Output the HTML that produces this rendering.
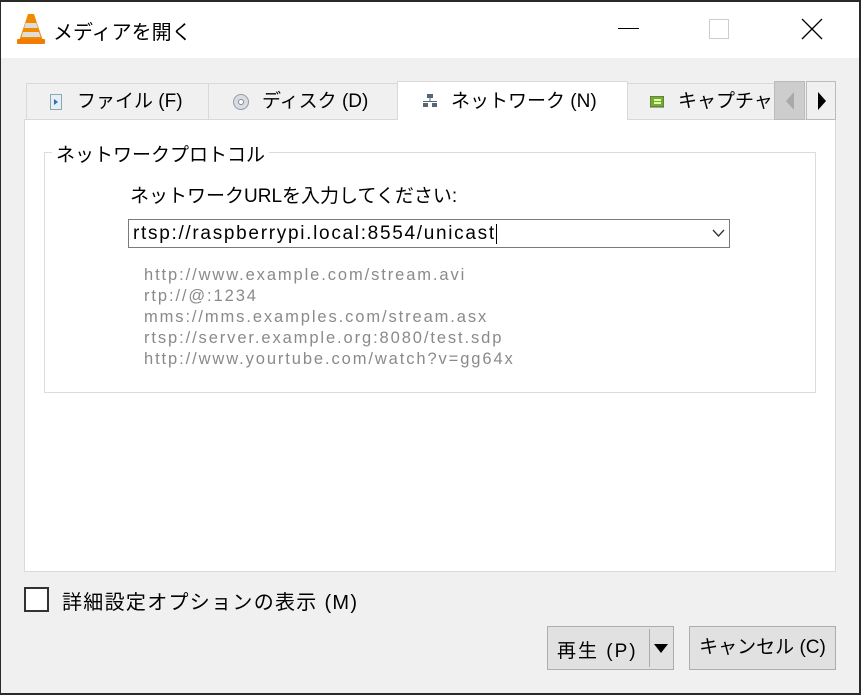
<!DOCTYPE html><html><head><meta charset="utf-8"><style>
*{margin:0;padding:0;box-sizing:border-box}
body{width:861px;height:695px;background:#2c2a27;position:relative;overflow:hidden;font-family:"Liberation Sans","Noto Sans CJK JP",sans-serif;color:#000}
.a{position:absolute}
.win{left:1px;top:2px;width:858px;height:691px;background:#f0f0f0}
.title{left:1px;top:2px;width:858px;height:56px;background:#fff}
.tab{position:absolute;top:83px;height:37px;background:#f0f0f0;border:1px solid #d9d9d9;font-size:19px;line-height:35px;white-space:nowrap;overflow:hidden}
.btn{position:absolute;background:#e1e1e1;border:1px solid #adadad;font-size:19px;text-align:center}
</style></head><body>
<div class="a win"></div>
<div class="a title"></div>
<svg class="a" style="left:17px;top:13px" width="28" height="32" viewBox="0 0 28 32"><path d="M11 1h6l9 27H2z" fill="#f28a00"/><path d="M8.5 10h11l1.3 5H7.2z" fill="#ddd"/><path d="M6 19h16l1.5 5h-19z" fill="#ddd"/><rect x="0" y="26" width="28" height="5" rx="1" fill="#f07c00"/></svg>
<div class="a" style="left:53px;top:16px;font-size:20px">メディアを開く</div>
<div class="a" style="left:618px;top:28px;width:21px;height:1px;background:#000"></div>
<div class="a" style="left:709px;top:19px;width:20px;height:20px;border:1px solid #ccc"></div>
<svg class="a" style="left:801px;top:18px" width="22" height="22"><path d="M1 1L21 21M21 1L1 21" stroke="#000" stroke-width="1.3"/></svg>
<div class="a" style="left:24px;top:119px;width:812px;height:453px;background:#fff;border:1px solid #d9d9d9"></div>
<div class="tab" style="left:26px;width:183px"><svg class="a" style="left:23px;top:10px" width="12" height="16"><rect x=".5" y=".5" width="11" height="15" fill="#e8eef5" stroke="#8aa"/><path d="M4 5l4 3-4 3z" fill="#2a6cc0"/></svg><span style="position:absolute;left:50px">ファイル (F)</span></div>
<div class="tab" style="left:208px;width:190px"><svg class="a" style="left:24px;top:10px" width="16" height="16"><circle cx="8" cy="8" r="7.5" fill="#d8dce4" stroke="#99a"/><circle cx="8" cy="8" r="2.5" fill="#fff" stroke="#888"/></svg><span style="position:absolute;left:53px">ディスク (D)</span></div>
<div class="tab" style="left:397px;top:81px;width:231px;height:39px;background:#fff;border-bottom:none"><svg class="a" style="left:25px;top:12px" width="14" height="14"><rect x="4" y="0" width="6" height="4" fill="#567"/><rect x="6.5" y="4" width="1" height="4" fill="#567"/><rect x="0" y="7" width="14" height="1" fill="#567"/><rect x="0" y="9" width="5" height="4" fill="#567"/><rect x="9" y="9" width="5" height="4" fill="#567"/></svg><span style="position:absolute;left:53px;top:2px">ネットワーク (N)</span></div>
<div class="tab" style="left:627px;width:160px"><svg class="a" style="left:22px;top:12px" width="14" height="12"><rect x="0" y="0" width="14" height="11" fill="#7a3" stroke="#463"/><rect x="4" y="3" width="7" height="2" fill="#dfa"/><rect x="4" y="6" width="7" height="2" fill="#dfa"/></svg><span style="position:absolute;left:50px">キャプチャーデバイス</span></div>
<div class="a" style="left:774px;top:81px;width:31px;height:39px;background:#cdcdcd;border:1px solid #bbb"><svg class="a" style="left:9px;top:9px" width="12" height="20"><path d="M10 1L2 10l8 9z" fill="#a9a9a9"/></svg></div>
<div class="a" style="left:806px;top:81px;width:30px;height:39px;background:#f0f0f0;border:1px solid #bbb"><svg class="a" style="left:9px;top:9px" width="12" height="20"><path d="M2 1l8 9-8 9z" fill="#000"/></svg></div>
<div class="a" style="left:44px;top:152px;width:772px;height:241px;border:1px solid #dcdcdc"></div>
<div class="a" style="left:52px;top:140px;background:#fff;padding:0 4px;font-size:19px">ネットワークプロトコル</div>
<div class="a" style="left:130px;top:181px;font-size:19px">ネットワークURLを入力してください:</div>
<div class="a" style="left:128px;top:219px;width:602px;height:29px;border:1px solid #7a7a7a;background:#fff;font-size:19px;line-height:27px;padding-left:4px;letter-spacing:1.7px;white-space:nowrap">rtsp://raspberrypi.local:8554/unicast<span style="display:inline-block;width:1px;height:20px;background:#000;vertical-align:middle"></span></div>
<svg class="a" style="left:712px;top:229px" width="13" height="9"><path d="M1 1l5.5 6L12 1" stroke="#333" stroke-width="1.3" fill="none"/></svg>
<div class="a" style="left:144px;top:265px;font-size:16.5px;line-height:21px;color:#8a8a8a;letter-spacing:1.9px;white-space:nowrap">http://www.example.com/stream.avi<br>rtp://@:1234<br>mms://mms.examples.com/stream.asx<br>rtsp://server.example.org:8080/test.sdp<br>http://www.yourtube.com/watch?v=gg64x</div>
<div class="a" style="left:24px;top:587px;width:25px;height:25px;border:2px solid #333;background:#fff"></div>
<div class="a" style="left:62px;top:586px;font-size:20px;letter-spacing:1.3px;white-space:nowrap">詳細設定オプションの表示 (M)</div>
<div class="btn" style="left:547px;top:626px;width:127px;height:44px"><span style="position:absolute;left:9px;top:9px;letter-spacing:2px;white-space:nowrap">再生 (P)</span><div class="a" style="left:101px;top:2px;width:1px;height:38px;background:#aaa"></div><svg class="a" style="left:106px;top:17px" width="14" height="9"><path d="M0 0h14L7 9z" fill="#000"/></svg></div>
<div class="btn" style="left:689px;top:626px;width:147px;height:44px;line-height:42px">キャンセル (C)</div>
</body></html>
